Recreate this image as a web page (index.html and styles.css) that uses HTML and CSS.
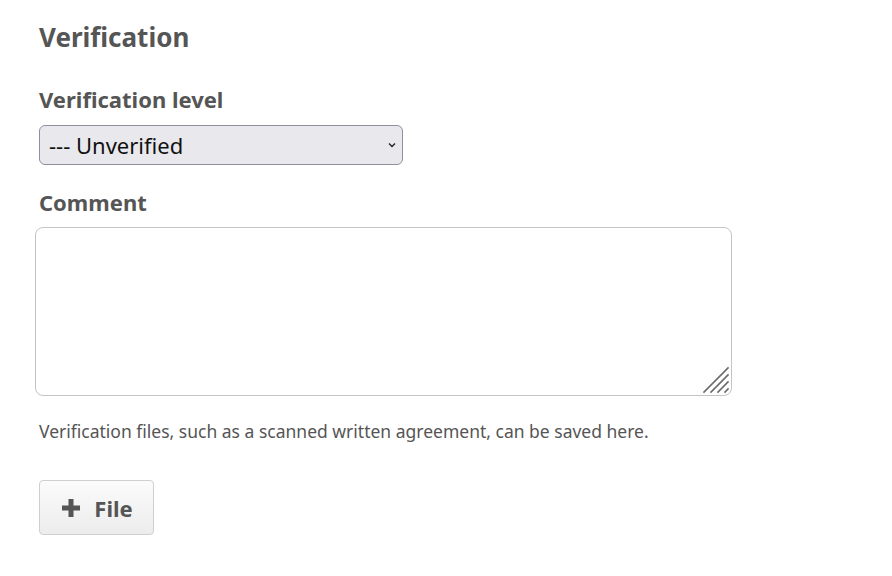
FILE: index.html
```html
<!DOCTYPE html>
<html>
<head>
<meta charset="utf-8">
<link rel="stylesheet" href="styles.css">
</head>
<body>
<div class="page">
  <h2 class="title">Verification</h2>
  <label class="label label-first" for="level">Verification level</label>
  <div class="select-wrap">
    <select id="level" class="select">
      <option>--- Unverified</option>
    </select>
    <svg class="chevron" width="8" height="6" viewBox="0 0 8 6"><path d="M1 1.5 L4 4.5 L7 1.5" fill="none" stroke="#222" stroke-width="1.4"/></svg>
  </div>
  <label class="label label-comment" for="comment">Comment</label>
  <div class="textarea-wrap">
    <textarea id="comment" class="textarea"></textarea>
    <svg class="grip" width="28" height="28" viewBox="0 0 28 28">
      <g stroke="#6a6a6a" stroke-width="1.6" stroke-linecap="square">
        <line x1="2" y1="26" x2="26" y2="2"/>
        <line x1="9" y1="26" x2="26" y2="9"/>
        <line x1="16" y1="26" x2="26" y2="16"/>
        <line x1="23" y1="26" x2="26" y2="23"/>
      </g>
    </svg>
  </div>
  <p class="help">Verification files, such as a scanned written agreement, can be saved here.</p>
  <button class="btn" type="button">
    <svg class="plus" width="18" height="18" viewBox="0 0 18 18"><path d="M6.5 0h5v6.5h6.5v5h-6.5v6.5h-5v-6.5h-6.5v-5h6.5z" fill="#555"/></svg>
    <span>File</span>
  </button>
</div>
</body>
</html>
```
FILE: styles.css
```css
html, body {
  margin: 0;
  padding: 0;
  background: #fff;
}
.page {
  padding: 19px 0 0 39px;
  font-family: "Noto Sans", "Open Sans", sans-serif;
  color: #555;
  display: flex;
  flex-direction: column;
  align-items: flex-start;
}
.title {
  margin: 0;
  font-size: 26px;
  line-height: 36px;
  font-weight: 700;
}
.label {
  display: block;
  font-size: 22px;
  line-height: 30px;
  font-weight: 700;
}
.label-first {
  margin-top: 29px;
}
.select-wrap {
  position: relative;
  margin-top: 11px;
}
.select {
  appearance: none;
  -webkit-appearance: none;
  width: 364px;
  height: 40px;
  box-sizing: border-box;
  padding: 0 0 0 9px;
  font-family: "Noto Sans", sans-serif;
  font-size: 22px;
  color: #111;
  background: #e9e9ed;
  border: 1px solid #8f8f9d;
  border-radius: 6px;
  margin: 0;
  display: block;
}
.chevron {
  position: absolute;
  right: 7px;
  top: 17px;
}
.label-comment {
  margin-top: 21.5px;
}
.textarea-wrap {
  position: relative;
  margin: 10.5px 0 0 -4px;
}
.textarea {
  margin: 0;
  width: 697px;
  height: 169px;
  box-sizing: border-box;
  border: 1px solid #c4c4c4;
  border-radius: 8px;
  resize: none;
  font-family: "Noto Sans", sans-serif;
  display: block;
}
.grip {
  position: absolute;
  right: 2px;
  bottom: 2px;
}
.help {
  margin: 23px 0 0 0;
  font-size: 17.5px;
  line-height: 24px;
  color: #555;
}
.btn {
  margin-top: 37px;
  width: 115px;
  height: 55px;
  box-sizing: border-box;
  border: 1px solid #cfcfcf;
  border-radius: 4px;
  background: linear-gradient(#fbfbfb, #ececec);
  display: flex;
  align-items: center;
  justify-content: center;
  gap: 14px;
  padding: 0 0 0 2px;
  font-family: "Noto Sans", sans-serif;
  font-size: 22px;
  font-weight: 700;
  color: #555;
}
.plus {
  display: block;
}
```
